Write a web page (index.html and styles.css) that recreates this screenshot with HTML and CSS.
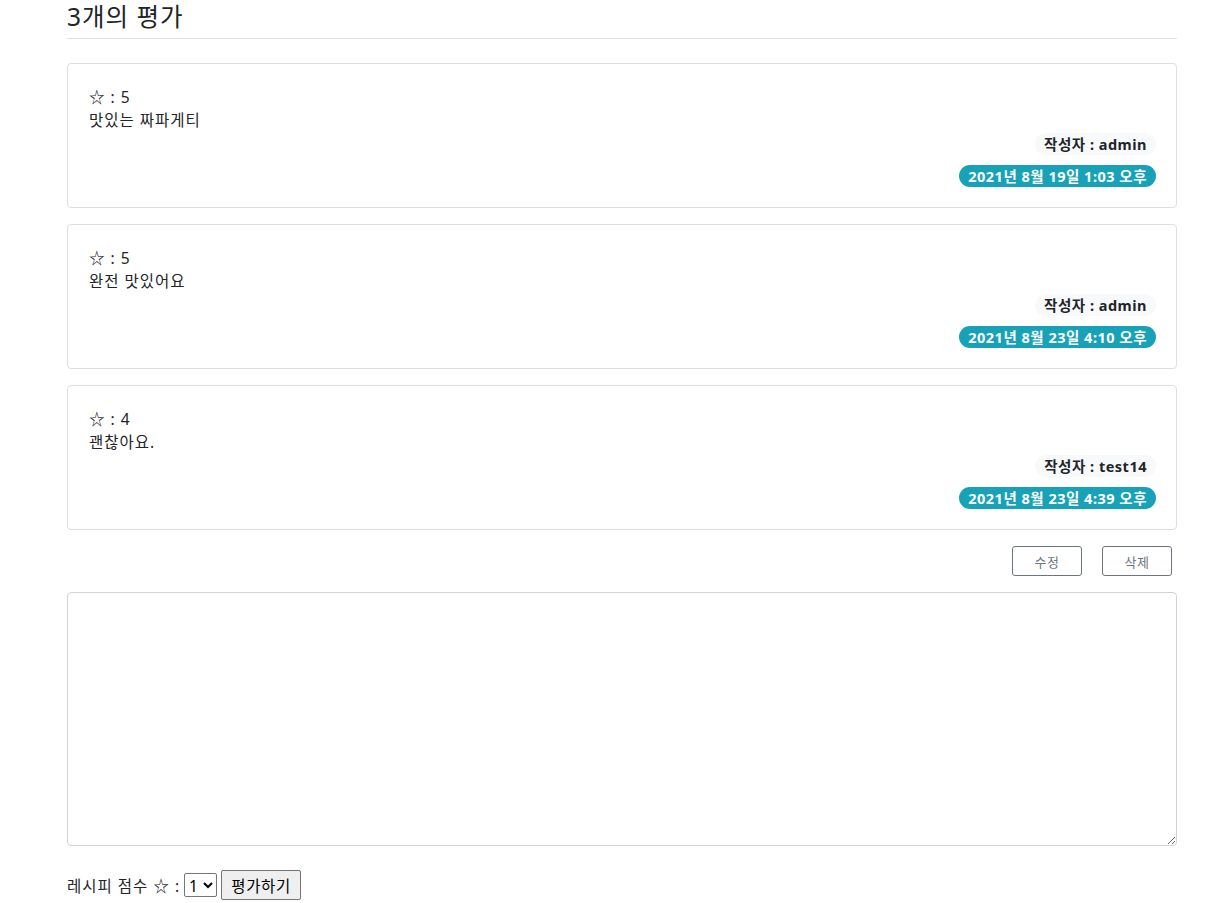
FILE: index.html
```html
<!DOCTYPE html>
<html lang="ko">
<head>
<meta charset="utf-8">
<link rel="stylesheet" href="styles.css">
</head>
<body>
<div class="container">
  <h3 class="title">3개의 평가</h3>
  <div class="card">
    <div class="line">☆ : 5</div>
    <div class="line">맛있는 짜파게티</div>
    <div class="meta">
      <span class="badge light">작성자 : admin</span>
      <span class="badge info">2021년 8월 19일 1:03 오후</span>
    </div>
  </div>
  <div class="card">
    <div class="line">☆ : 5</div>
    <div class="line">완전 맛있어요</div>
    <div class="meta">
      <span class="badge light">작성자 : admin</span>
      <span class="badge info">2021년 8월 23일 4:10 오후</span>
    </div>
  </div>
  <div class="card">
    <div class="line">☆ : 4</div>
    <div class="line">괜찮아요.</div>
    <div class="meta">
      <span class="badge light">작성자 : test14</span>
      <span class="badge info">2021년 8월 23일 4:39 오후</span>
    </div>
  </div>
  <div class="actions">
    <button class="btn-outline">수정</button>
    <button class="btn-outline">삭제</button>
  </div>
  <textarea class="review"></textarea>
  <div class="submit-row">
    <span>레시피 점수 ☆ :</span>
    <select class="score"><option>1</option><option>2</option><option>3</option><option>4</option><option>5</option></select>
    <button class="submit">평가하기</button>
  </div>
</div>
</body>
</html>
```
FILE: styles.css
```css
* { box-sizing: border-box; }
html, body { margin: 0; padding: 0; background: #fff; }
body {
  font-family: "Noto Sans", "Noto Sans CJK KR", sans-serif;
  color: #212529;
  font-size: 15.5px;
  letter-spacing: 1px;
}
.container {
  width: 1110px;
  margin-left: 67px;
}
.title {
  margin: 0;
  font-size: 24.5px;
  font-weight: 400;
  line-height: 32px;
  padding-top: 1px;
  padding-bottom: 4px;
  border-bottom: 1px solid #dee2e6;
  height: 39px;
  letter-spacing: 1px;
}
.card {
  margin-top: 24px;
  border: 1px solid #dfdfdf;
  border-radius: 4px;
  padding: 22px 20px 20px 21px;
  height: 145px;
}
.card + .card { margin-top: 16px; }
.line {
  line-height: 23px;
  height: 23px;
}
.meta {
  display: flex;
  flex-direction: column;
  align-items: flex-end;
  gap: 10px;
  margin-top: 1px;
}
.badge {
  display: inline-block;
  font-size: 14.5px;
  font-weight: 700;
  line-height: 22px;
  height: 22px;
  padding: 0 9px;
  border-radius: 11px;
  letter-spacing: 0.5px;
}
.badge.light { background: #f8f9fa; color: #212529; }
.badge.info { background: #17a2b8; color: #fff; }
.actions {
  display: flex;
  justify-content: flex-end;
  gap: 20px;
  padding-right: 5px;
  margin-top: 16px;
}
.btn-outline {
  width: 70px;
  height: 30px;
  border: 1px solid #6c757d;
  border-radius: 3px;
  background: #fff;
  color: #6c757d;
  font-family: "Noto Sans", "Noto Sans CJK KR", sans-serif;
  font-size: 13px;
  font-weight: 400;
  padding: 0;
  letter-spacing: 0.5px;
}
.review {
  display: block;
  width: 1110px;
  height: 254px;
  margin-top: 16px;
  border: 1px solid #ced4da;
  border-radius: 4px;
  resize: vertical;
}
.submit-row {
  display: flex;
  align-items: center;
  gap: 4px;
  margin-top: 24px;
}
.score {
  height: 24px;
  width: 33px;
  font-size: 15.5px;
  padding: 0;
  font-family: "Noto Sans", "Noto Sans CJK KR", sans-serif;
  border: 1px solid #767676;
  border-radius: 2px;
  background: #fff;
  color: #000;
}
.submit {
  height: 30px;
  width: 80px;
  font-size: 15.5px;
  font-weight: 400;
  font-family: "Noto Sans", "Noto Sans CJK KR", sans-serif;
  padding: 0;
  border: 1px solid #767676;
  border-radius: 2px;
  background: #efefef;
  color: #000;
  letter-spacing: 0.6px;
}
```
